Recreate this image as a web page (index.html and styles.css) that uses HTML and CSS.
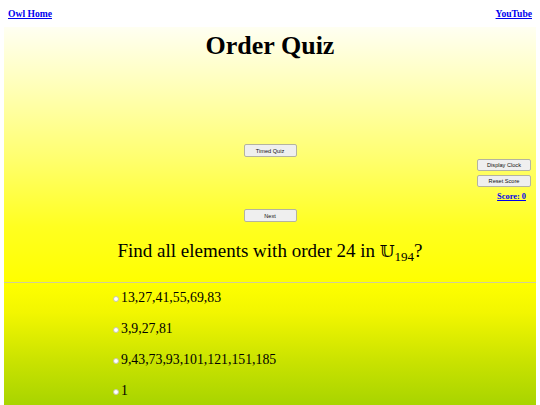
FILE: index.html
```html
<!DOCTYPE html>
<html>
<head>
<meta charset="utf-8">
<link rel="stylesheet" href="styles.css">
</head>
<body>
<nav class="topbar">
  <a href="#" class="toplink">Owl Home</a>
  <a href="#" class="toplink">YouTube</a>
</nav>
<section class="quiz-head">
  <h1 class="title">Order Quiz</h1>
  <div class="center-row timed-row"><button class="btn">Timed Quiz</button></div>
  <div class="side">
    <button class="btn btn-side">Display Clock</button>
    <button class="btn btn-side">Reset Score</button>
    <a href="#" class="score">Score: 0</a>
  </div>
  <div class="center-row next-row"><button class="btn">Next</button></div>
  <p class="question">Find all elements with order 24 in <span class="bb">𝕌</span><sub class="sub">194</sub>?</p>
</section>
<section class="answers">
  <ul class="choices">
    <li class="choice"><span class="radio"></span>13,27,41,55,69,83</li>
    <li class="choice"><span class="radio"></span>3,9,27,81</li>
    <li class="choice"><span class="radio"></span>9,43,73,93,101,121,151,185</li>
    <li class="choice"><span class="radio"></span>1</li>
  </ul>
</section>
</body>
</html>
```
FILE: styles.css
```css
html, body {
  margin: 0;
  padding: 0;
  background: #ffffff;
  overflow: hidden;
}
body {
  padding: 0 4px;
  font-family: "Liberation Serif", "Times New Roman", serif;
  color: #000;
  height: 405px;
}
.topbar {
  display: flex;
  justify-content: space-between;
  height: 19px;
  padding: 8px 4px 0 4px;
}
.toplink {
  font-size: 9.6px;
  font-weight: bold;
  color: #0000ee;
  text-decoration: underline;
  line-height: 11px;
}
.quiz-head {
  background: linear-gradient(to bottom, #fffff2 0px, #ffffb8 60px, #ffff70 130px, #ffff20 200px, #ffff00 255px);
  height: 255px;
  display: flex;
  flex-direction: column;
  border-bottom: 1px solid #cfcf98;
}
.title {
  margin: 4px 0 0 0;
  font-size: 26px;
  line-height: 30px;
  font-weight: bold;
  text-align: center;
}
.center-row {
  display: flex;
  justify-content: center;
}
.timed-row {
  margin-top: 83px;
}
.next-row {
  margin-top: 7px;
}
.btn {
  font-family: "Liberation Sans", Arial, sans-serif;
  font-size: 5.6px;
  width: 53px;
  height: 13px;
  padding: 0;
  background: #efefef;
  border: 1px solid #b4b4a0;
  border-radius: 2px;
  color: #111;
}
.side {
  display: flex;
  flex-direction: column;
  align-items: flex-end;
  gap: 4px;
  margin: 2px 5px 0 0;
}
.btn-side {
  width: 54px;
  height: 12px;
}
.score {
  font-size: 8.4px;
  font-weight: bold;
  color: #0000ee;
  line-height: 10px;
  margin: 1px 5px 0 0;
}
.question {
  margin: 18px 0 0 0;
  font-size: 19px;
  line-height: 22px;
  text-align: center;
}
.bb {
  font-family: "DejaVu Serif", "DejaVu Sans", serif;
  font-size: 17px;
}
.sub {
  font-size: 13px;
  vertical-align: -4px;
  line-height: 0;
}
.answers {
  background: linear-gradient(to bottom, #ffff00 0px, #f2f600 30px, #c8e200 80px, #a8d400 122px);
  height: 122px;
}
.choices {
  list-style: none;
  margin: 0;
  padding: 0 0 0 109px;
}
.choice {
  display: flex;
  align-items: center;
  height: 29px;
  padding-bottom: 2px;
  font-size: 13.8px;
}
.radio {
  width: 4px;
  height: 4px;
  border-radius: 50%;
  background: #ffffff;
  border: 1px solid #c8c8a8;
  margin: 3px 2px 0 0;
}
```
